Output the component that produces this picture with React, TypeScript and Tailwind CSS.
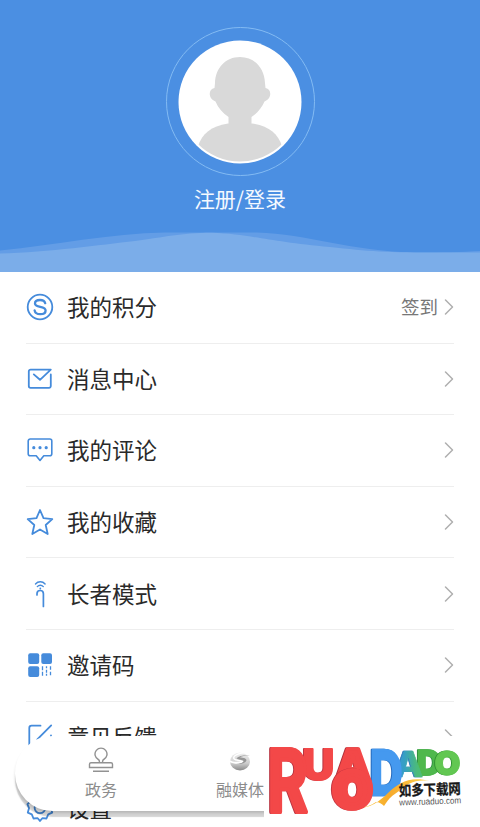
import React from 'react';
import { ChevronRight } from 'lucide-react';

interface MenuItem {
  label: string;
  icon: React.ReactNode;
  extra?: string;
}

interface IconProps {
  children: React.ReactNode;
}

const Icon: React.FC<IconProps> = ({ children }) => (
  <svg
    viewBox="0 0 28 28"
    className="w-7 h-7 overflow-visible"
    fill="none"
    stroke="#458bdb"
    strokeWidth="1.8"
    strokeLinecap="round"
    strokeLinejoin="round"
  >
    {children}
  </svg>
);

const menuItems: MenuItem[] = [
  {
    label: '我的积分',
    extra: '签到',
    icon: (
      <Icon>
        <circle cx="14" cy="14" r="12.300" />
        <path d="M19.200 10.200C18.600 8 16.700 7 14 7c-3 0-5 1.300-5 3.500 0 4.700 10.600 2.100 10.600 7 0 2.300-2.200 3.700-5.300 3.700s-5.300-1.400-5.700-3.800" strokeWidth="2.300" />
      </Icon>
    ),
  },
  {
    label: '消息中心',
    icon: (
      <Icon>
        <path d="M24.800 9.500V21a1.800 1.800 0 0 1-1.800 1.800H4.600A1.800 1.800 0 0 1 2.800 21V6.400a1.800 1.800 0 0 1 1.800-1.800H24.800L14 14.800 7.800 9.400" />
      </Icon>
    ),
  },
  {
    label: '我的评论',
    icon: (
      <Icon>
        <path d="M4.200 3H23.800a2 2 0 0 1 2 2V17.700a2 2 0 0 1-2 2H17.800L14 24.400l-3.800-4.700H4.200a2 2 0 0 1-2-2V5a2 2 0 0 1 2-2z" strokeWidth="1.600" />
        <g fill="#458bdb" stroke="none">
          <circle cx="7.800" cy="11.700" r="1.600" />
          <circle cx="14" cy="11.700" r="1.600" />
          <circle cx="20.200" cy="11.700" r="1.600" />
        </g>
      </Icon>
    ),
  },
  {
    label: '我的收藏',
    icon: (
      <Icon>
        <path d="M14 2l3.500 8.200 8.800.9-6.600 5.900 2 9L14 21.400 6.300 26l2-9-6.600-5.900 8.800-.9z" />
      </Icon>
    ),
  },
  {
    label: '长者模式',
    icon: (
      <Icon>
        <g strokeWidth="1.400">
          <path d="M9.500 4c2.600-3 7-3 9.600 0M11.300 6.600c1.700-1.900 4.300-1.900 6 0" />
          <path d="M11 15v-1.300c0-4.300 6.400-4.300 6.400 0V26.500" strokeWidth="1.700" />
        </g>
        <circle cx="14.300" cy="8.500" r=".9" fill="#458bdb" stroke="none" />
      </Icon>
    ),
  },
  {
    label: '邀请码',
    icon: (
      <Icon>
        <g fill="#458bdb" stroke="none">
          <rect x="2.200" y="2.200" width="11" height="10.800" rx="2" />
          <rect x="15.300" y="2.200" width="10.700" height="10.800" rx="2" />
          <rect x="2.200" y="15.200" width="11" height="10.800" rx="2" />
        </g>
        <g strokeLinecap="butt" strokeWidth="1.300">
          <path d="M16.500 15.200v10.800" strokeDasharray="4 1.500" />
          <path d="M20.500 15.200v10.800" strokeDasharray="2 1.500 3 1" />
          <path d="M24.500 15.200v10.800" strokeDasharray="3.500 2" />
        </g>
      </Icon>
    ),
  },
  {
    label: '意见反馈',
    icon: (
      <Icon>
        <path d="M14.500 2.700H5.500a2.200 2.200 0 0 0-2.200 2.200V23a2 2 0 0 0 2 2H23a2 2 0 0 0 2-2V12.500M25.200 2.400 11.300 16.400" />
      </Icon>
    ),
  },
  {
    label: '设置',
    icon: (
      <Icon>
        <path d="M14 1l3.500 2.200 4.500-.4 1.200 4.400 3.400 2.900-1.600 4.100 1.200 4.400-4 1.700-1.700 4.200-4.200-.3L14 27l-2.300-2.800-4.200.3-1.700-4.200-4-1.700L3 14.200 1.400 10.100l3.400-2.900L6 2.800l4.500.4z" />
        <circle cx="14" cy="13.800" r="5.400" />
      </Icon>
    ),
  },
];

const ProfileHeader: React.FC = () => (
  <header className="relative h-[272px] shrink-0 bg-[#4b8fe2] flex flex-col items-center pt-[27px]">
    <svg viewBox="0 0 480 42" className="absolute left-0 bottom-0 w-full h-[42px]">
      <path d="M0 20.500C55 15 110 3.500 165 2.500h92c50 1 95 19.500 160 20 25 0 45-.5 63-1.500V42H0z" fill="#639de6" />
      <path d="M0 23.500C50 22 100 15 135 11 165 7 180 3 212 2.700 250 4 270 12 330 17c45 5 60 6 150 5.500V42H0z" fill="#7bade9" />
    </svg>
    <div className="relative w-[149px] h-[149px] rounded-full border border-[#83bbf3] flex items-center justify-center">
      <svg viewBox="0 0 124 124" className="w-[124px] h-[124px]">
        <defs>
          <clipPath id="avatar">
            <circle cx="62" cy="62" r="59.500" />
          </clipPath>
        </defs>
        <circle cx="62" cy="62" r="61.500" fill="#fff" />
        <g fill="#d9d9d9" clipPath="url(#avatar)">
          <path d="M62 17c-14.500 0-24.500 11-25 26l-.5 5c-6.500 1-6.500 11 1 13.500 2.500 6 7 11.500 13 15.500v8h23v-8c6-4 10.500-9.500 13-15.500 7.500-2.500 7.500-12.500 1-13.500l-.5-5c-.5-15-10.500-26-25-26z" />
          <path d="M50 83.500C33 86 24 94 20 106v18h84v-18C100 94 91 86 74 83.500z" />
        </g>
      </svg>
    </div>
    <div className="relative mt-[7px] text-[21px] leading-[30px] text-[#f4f9ff] font-normal">注册/登录</div>
  </header>
);

const MenuRow: React.FC<{ item: MenuItem }> = ({ item }) => (
  <li className="h-[71.600px] shrink-0 flex items-center border-b border-[#eeeeee]">
    {item.icon}
    <span className="ml-[13px] pb-[2px] flex-1 text-[22.500px] leading-8 text-[#2a2a2a] font-normal">{item.label}</span>
    {item.extra && <span className="text-[18.500px] text-[#777777] font-normal">{item.extra}</span>}
    <ChevronRight className="w-7 h-7 -mr-[9px] -ml-[3px] text-[#b0b0b0]" strokeWidth={1.3} />
  </li>
);

const BottomNav: React.FC = () => (
  <nav className="absolute left-[15px] right-0 top-[736px] h-[75px] rounded-l-full bg-white shadow-[0_6px_1px_0_rgba(0,0,0,0.17),-1px_3px_3px_-1px_rgba(0,0,0,0.14)] flex text-[16px] leading-5 text-[#8c8c8c] font-normal">
    <div className="w-[172px] flex flex-col items-center pt-[10px]">
      <svg viewBox="0 0 28 28" className="w-7 h-7" fill="none" stroke="#929292" strokeWidth="1.400">
        <path d="M12.300 16.800c.4-2 0-2.800-1-3.300a6 6 0 1 1 5.400 0c-1 .5-1.400 1.300-1 3.300M4 16.800h20a1.500 1.500 0 0 1 1.500 1.500v3.200h-23v-3.200A1.500 1.500 0 0 1 4 16.800zM6 25.300h16" />
      </svg>
      <span className="mt-[5px]">政务</span>
    </div>
    <div className="w-[106px] flex flex-col items-center pt-[12px]">
      <svg viewBox="0 0 26 26" className="w-[26px] h-[26px]">
        <defs>
          <linearGradient id="media" x1="0" y1="0" x2="0" y2="1">
            <stop offset="0" stopColor="#f0f0f0" />
            <stop offset=".6" stopColor="#cccccc" />
            <stop offset="1" stopColor="#8a8a8a" />
          </linearGradient>
        </defs>
        <ellipse cx="13" cy="13.500" rx="10" ry="9" fill="url(#media)" />
        <path d="M25 5C16 4.500 7 7 7.500 10c.5 2 7 1.500 10 3.500C14 16.500 8 16.500 2 14v-2c5 2.500 9 2 12 1-4 0-8-.5-8-3C6 6 16 3 25 4z" fill="#fff" />
        <path d="M9.500 10.200c2.500-2.700 9-3.500 13.500-2.700-4.500 0-8.500.6-10 1.900 4 0 6.500 1 6.500 2.900-1 3-6 4.200-10 3.700 4-.5 7-1.500 7-3-.5-1.500-6-1.300-7-2.800z" fill="#969696" />
      </svg>
      <span className="mt-[5px] whitespace-nowrap">融媒体</span>
    </div>
  </nav>
);

interface LetterProps {
  char: string;
  transform: string;
  fill: string;
  side: string;
  weight?: number;
  outline?: number;
}

// The hard drop shadow gives each letter its thickness
const Letter: React.FC<LetterProps> = ({ char, transform, fill, side, weight = 900, outline = 0.8 }) => (
  <g style={{ filter: `drop-shadow(-1px 0.500px 0 ${side})` }}>
    <text
      transform={transform}
      fontFamily="Inter, Lato, sans-serif"
      fontWeight={weight}
      fontSize="40"
      fill={fill}
      stroke={fill}
      strokeWidth={outline}
      strokeLinejoin="round"
    >
      {char}
    </text>
  </g>
);

const SiteBadge: React.FC = () => (
  <div className="absolute right-0 bottom-0 w-[216px] h-[91px] bg-white">
    <svg viewBox="264 736 216 91" className="w-full h-full">
      <defs>
        <linearGradient id="teal" x1="0" y1="0" x2="1" y2="0">
          <stop offset="0" stopColor="#3a93e0" />
          <stop offset=".35" stopColor="#369fc4" />
          <stop offset=".8" stopColor="#4cbc78" />
        </linearGradient>
        <linearGradient id="ribbon" x1="0" y1="0" x2="1" y2="0">
          <stop offset="0" stopColor="#ffd33c" />
          <stop offset=".5" stopColor="#f6aa2c" />
          <stop offset="1" stopColor="#ffd650" />
        </linearGradient>
      </defs>
      <Letter char="D" transform="translate(417 775) scale(.84 .84)" fill="#4fb84d" side="#2f9040" outline={1.5} />
      <Letter char="O" transform="translate(434.500 775) scale(.84 .83)" fill="#62c752" side="#319332" outline={1.2} />
      <Letter char="A" transform="translate(394 777) scale(.95 .9)" fill="url(#teal)" side="#2a74b8" weight={800} />
      <Letter char="D" transform="translate(370 795) scale(1.130 1.560)" fill="#4599ef" side="#2469bc" weight={800} outline={1.5} />
      <path d="M350 807c15 4 27-3 38-14 11-10 21-17 42-12-16-2-22 3-31 10-7 5-9 6-15 15-2-2-5-4-8-4-7 5-16 7-26 5z" fill="url(#ribbon)" />
      <Letter char="A" transform="translate(335 782) scale(1.180 1.130)" fill="#f34848" side="#ae2f39" weight={800} outline={3} />
      <Letter char="O" transform="translate(333 806.500) scale(1.260 1.220)" fill="#f34848" side="#c53640" outline={4.5} />
      <Letter char="U" transform="translate(302.500 780) scale(1.100 1.060)" fill="#f34848" side="#b83340" weight={800} outline={1.8} />
      <Letter char="R" transform="translate(267.500 811.500) scale(1.540 2.150)" fill="#f34848" side="#b83340" weight={700} outline={1.8} />
      <g transform="rotate(-2 399 796)">
        <text x="399" y="796" textLength="62" lengthAdjust="spacingAndGlyphs" fontSize="14.500" fontWeight="700" fontFamily="'Noto Sans CJK SC', sans-serif" fill="#171717" stroke="#171717" strokeWidth=".3">如多下载网</text>
        <text x="399" y="805.500" textLength="62" lengthAdjust="spacingAndGlyphs" fontSize="9" fontFamily="'Liberation Sans', sans-serif" fill="#555">www.ruaduo.com</text>
      </g>
    </svg>
  </div>
);

const App: React.FC = () => {
  return (
    <div className="relative flex flex-col w-[480px] h-[827px] overflow-hidden bg-white font-['Noto_Sans_CJK_SC',sans-serif]">
      <ProfileHeader />
      <ul className="flex flex-col px-[26px]">
        {menuItems.map((item) => (
          <MenuRow key={item.label} item={item} />
        ))}
      </ul>
      <BottomNav />
      <SiteBadge />
    </div>
  );
};

export default App;
